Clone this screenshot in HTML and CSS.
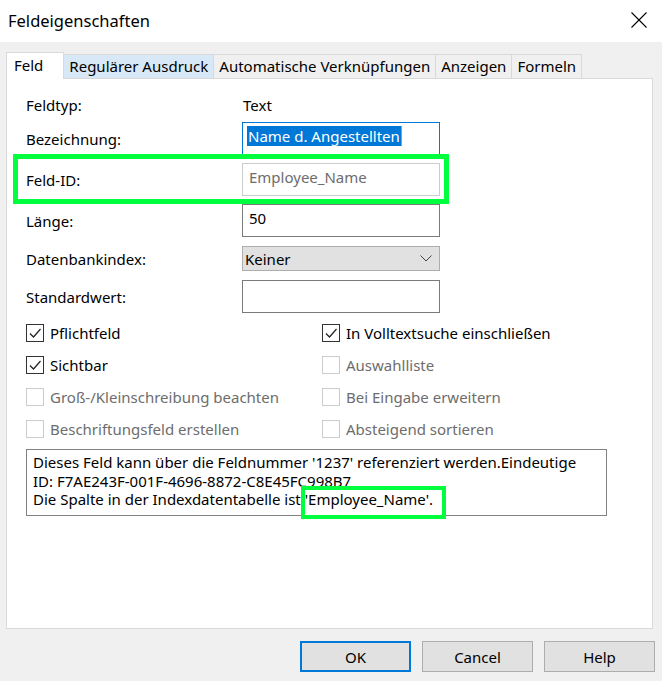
FILE: index.html
```html
<!DOCTYPE html>
<html lang="de">
<head>
    <meta charset="UTF-8">
    <meta name="viewport" content="width=device-width, initial-scale=1.0">
    <title>Feldeigenschaften</title>
    <link rel="stylesheet" href="styles.css">
</head>
<body>

<div class="window">
    <div class="titlebar">
        <span class="title">Feldeigenschaften</span>
        <span class="close">
            <svg width="16" height="16" viewBox="0 0 16 16"><path d="M0.5 0.5 L15.5 15.5 M15.5 0.5 L0.5 15.5" stroke="#000" stroke-width="1.1" fill="none"/></svg>
        </span>
    </div>

    <div class="tabs">
        <div class="tab active">Feld</div>
        <div class="tab hover">Regulärer Ausdruck</div>
        <div class="tab">Automatische Verknüpfungen</div>
        <div class="tab">Anzeigen</div>
        <div class="tab">Formeln</div>
    </div>

    <div class="panel">
        <div class="fields">
            <div class="row row-type">
                <span class="label">Feldtyp:</span>
                <span class="value">Text</span>
            </div>
            <div class="row row-name">
                <span class="label">Bezeichnung:</span>
                <div class="input focused"><span class="selected">Name d. Angestellten</span></div>
            </div>
            <div class="row marked">
                <span class="label">Feld-ID:</span>
                <div class="input disabled">Employee_Name</div>
            </div>
            <div class="row">
                <span class="label">Länge:</span>
                <div class="input">50</div>
            </div>
            <div class="row row-select">
                <span class="label">Datenbankindex:</span>
                <div class="select">
                    <span>Keiner</span>
                    <svg width="12" height="7" viewBox="0 0 12 7"><polyline points="0.5,0.5 6,6 11.5,0.5" fill="none" stroke="#444" stroke-width="1"/></svg>
                </div>
            </div>
            <div class="row row-select-next">
                <span class="label">Standardwert:</span>
                <div class="input"></div>
            </div>
        </div>

        <div class="checks">
            <div class="check checked"><span class="box"><svg width="16" height="16" viewBox="0 0 16 16"><polyline points="3,8.5 6.5,12 13.5,4" fill="none" stroke="#222" stroke-width="1.2"/></svg></span>Pflichtfeld</div>
            <div class="check checked"><span class="box"><svg width="16" height="16" viewBox="0 0 16 16"><polyline points="3,8.5 6.5,12 13.5,4" fill="none" stroke="#222" stroke-width="1.2"/></svg></span>In Volltextsuche einschließen</div>
            <div class="check checked"><span class="box"><svg width="16" height="16" viewBox="0 0 16 16"><polyline points="3,8.5 6.5,12 13.5,4" fill="none" stroke="#222" stroke-width="1.2"/></svg></span>Sichtbar</div>
            <div class="check disabled"><span class="box"></span>Auswahlliste</div>
            <div class="check disabled"><span class="box"></span>Groß-/Kleinschreibung beachten</div>
            <div class="check disabled"><span class="box"></span>Bei Eingabe erweitern</div>
            <div class="check disabled"><span class="box"></span>Beschriftungsfeld erstellen</div>
            <div class="check disabled"><span class="box"></span>Absteigend sortieren</div>
        </div>

        <div class="info">
            Dieses Feld kann über die Feldnummer '1237' referenziert werden.Eindeutige<br>
            ID: F7AE243F-001F-4696-8872-C8E45FC998B7<br>
            Die Spalte in der Indexdatentabelle ist <span class="mark">'Employee_Name'.</span>
        </div>
    </div>

    <div class="buttons">
        <button class="default">OK</button>
        <button>Cancel</button>
        <button>Help</button>
    </div>
</div>

</body>
</html>
```

FILE: styles.css
```css
body {
    margin: 0;
    background: #f0f0f0;
    font-family: "Noto Sans", sans-serif;
    font-size: 15px;
    color: #000;
}
.window {
    width: 662px;
    height: 681px;
    overflow: hidden;
}
.titlebar {
    height: 42px;
    background: #fff;
    display: flex;
    align-items: center;
    justify-content: space-between;
    padding: 0 15px 0 8px;
    box-sizing: border-box;
}
.title {
    font-size: 16.5px;
    margin-top: -2px;
}
.close {
    display: flex;
    margin-top: -2px;
}
.tabs {
    display: flex;
    align-items: flex-end;
    height: 26px;
    margin: 10px 0 0 6px;
}
.tab {
    height: 24px;
    line-height: 23px;
    padding: 0 5px;
    border: 1px solid #d9d9d9;
    border-bottom: none;
    margin-left: -1px;
    box-sizing: border-box;
    white-space: nowrap;
}
.tab.active {
    height: 27px;
    line-height: 25px;
    margin: 0 0 -1px 0;
    padding: 0 20px 0 7px;
    background: #fff;
    position: relative;
    z-index: 1;
}
.tab.hover {
    background: #d8e8f6;
}
.panel {
    height: 551px;
    margin: 0 9px 0 6px;
    background: #fff;
    border: 1px solid #d9d9d9;
    box-sizing: border-box;
    padding: 13px 0 0 19px;
}
.row {
    display: flex;
    align-items: center;
    width: 414px;
    height: 33px;
    margin-top: 8px;
}
.row-type {
    height: 26px;
    margin-top: 0;
}
.row-name {
    margin-top: 4px;
}
.row-select {
    height: 25px;
    margin-top: 9px;
}
.row-select-next {
    margin-top: 9px;
}
.label {
    width: 216px;
    flex: none;
}
.value {
    padding-left: 1px;
}
.input {
    width: 198px;
    height: 100%;
    box-sizing: border-box;
    border: 1px solid #7a7a7a;
    padding: 2px 6px;
    line-height: 22px;
}
.input.focused {
    border-color: #0078d7;
    padding-left: 4px;
}
.selected {
    background: #0078d7;
    color: #fff;
    border-right: 1px solid #e88a3a;
    padding: 0 1px;
}
.input.disabled {
    border-color: #cccccc;
    color: #6d6d6d;
}
.marked {
    position: relative;
}
.marked::before {
    content: "";
    position: absolute;
    left: -13px;
    right: -9px;
    top: -9px;
    bottom: -8px;
    border: 5px solid #00ff3c;
    z-index: 2;
}
.select {
    width: 198px;
    height: 100%;
    box-sizing: border-box;
    background: #e1e1e1;
    border: 1px solid #adadad;
    display: flex;
    align-items: center;
    justify-content: space-between;
    padding: 0 7px 0 2px;
}
.checks {
    display: grid;
    grid-template-columns: 296px 1fr;
    grid-auto-rows: 32px;
    margin-top: 4px;
}
.check {
    display: flex;
    align-items: center;
    gap: 6px;
}
.box {
    width: 18px;
    height: 18px;
    box-sizing: border-box;
    border: 1px solid #333;
    display: flex;
    align-items: center;
    justify-content: center;
}
.check.disabled {
    color: #6d6d6d;
}
.check.disabled .box {
    border-color: #cccccc;
}
.info {
    width: 581px;
    height: 67px;
    box-sizing: border-box;
    margin-top: 4px;
    border: 1px solid #828282;
    padding: 3px 6px;
    line-height: 18.5px;
}
.mark {
    position: relative;
}
.mark::after {
    content: "";
    position: absolute;
    left: -4px;
    right: -13px;
    top: -3px;
    bottom: -10px;
    border: 4px solid #00ff3c;
}
.buttons {
    display: flex;
    justify-content: flex-end;
    gap: 11px;
    margin: 12px 7px 0 0;
}
button {
    width: 111px;
    height: 31px;
    background: #e1e1e1;
    border: 1px solid #adadad;
    font-family: inherit;
    font-size: 15px;
    color: #000;
    padding: 0;
}
button.default {
    border: 2px solid #0078d7;
}
```
